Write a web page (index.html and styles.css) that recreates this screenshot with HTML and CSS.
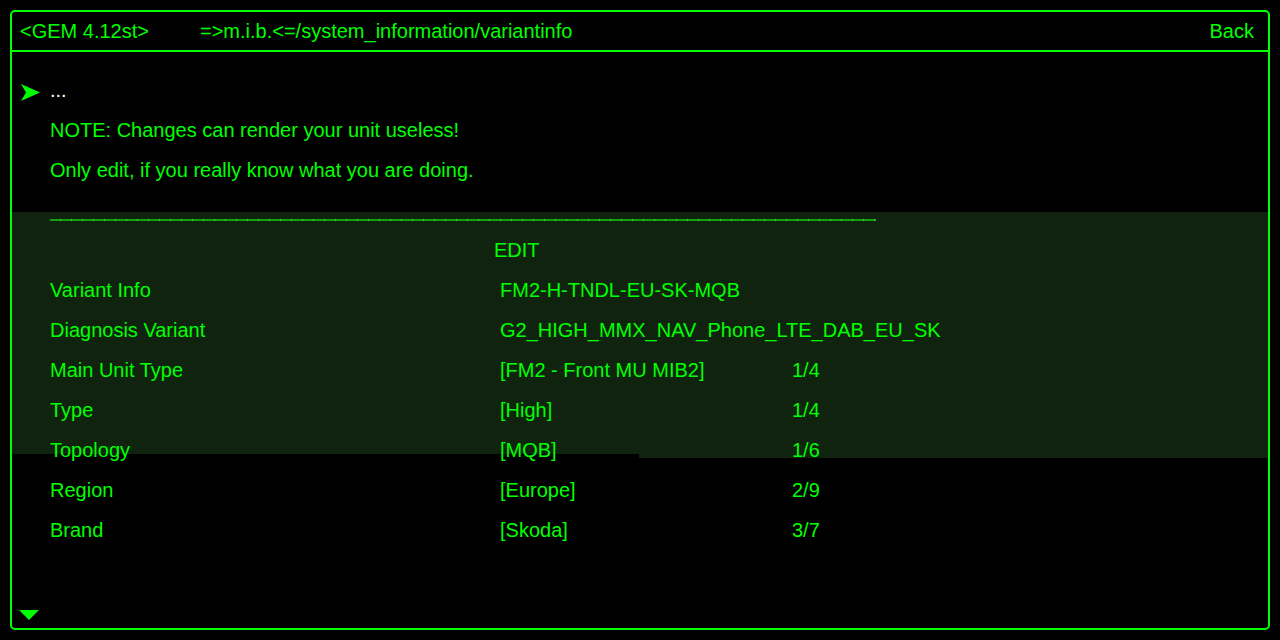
FILE: index.html
```html
<!DOCTYPE html>
<html>
<head>
<meta charset="utf-8">
<link rel="stylesheet" href="styles.css">
</head>
<body>
<div class="frame">
  <div class="header">
    <span class="ver">&lt;GEM 4.12st&gt;</span>
    <span class="path">=&gt;m.i.b.&lt;=/system_information/variantinfo</span>
    <span class="back">Back</span>
  </div>
  <div class="content">
    <div class="row first">
      <svg class="cursor" width="19" height="17" viewBox="0 0 19 17"><polygon points="0,0 19,8.5 0,17 5,8.5" fill="#00ff00"/></svg>
      <span class="label dots">...</span>
    </div>
    <div class="row"><span class="label wide">NOTE: Changes can render your unit useless!</span></div>
    <div class="row"><span class="label wide">Only edit, if you really know what you are doing.</span></div>
    <div class="gap"></div>
    <div class="panel">
      <div class="sep"><div class="sepline"></div></div>
      <div class="row"><span class="label"></span><span class="edit">EDIT</span></div>
      <div class="row"><span class="label">Variant Info</span><span class="value">FM2-H-TNDL-EU-SK-MQB</span></div>
      <div class="row"><span class="label">Diagnosis Variant</span><span class="value">G2_HIGH_MMX_NAV_Phone_LTE_DAB_EU_SK</span></div>
      <div class="row"><span class="label">Main Unit Type</span><span class="value">[FM2 - Front MU MIB2]</span><span class="count">1/4</span></div>
      <div class="row"><span class="label">Type</span><span class="value">[High]</span><span class="count">1/4</span></div>
      <div class="row"><span class="label">Topology</span><span class="value">[MQB]</span><span class="count">1/6</span></div>
      <div class="row"><span class="label">Region</span><span class="value">[Europe]</span><span class="count">2/9</span></div>
      <div class="row"><span class="label">Brand</span><span class="value">[Skoda]</span><span class="count">3/7</span></div>
    </div>
  </div>
  <div class="footer">
    <svg class="more" width="20" height="10" viewBox="0 0 20 10"><polygon points="0,0 20,0 10,10" fill="#00ff00"/></svg>
  </div>
</div>
</body>
</html>
```

FILE: styles.css
```css
html, body {
  margin: 0;
  padding: 0;
  background: #000;
}
body {
  width: 1280px;
  height: 640px;
  padding: 10px;
  box-sizing: border-box;
  font-family: "Liberation Sans", Arial, sans-serif;
  color: #00ff00;
  overflow: hidden;
}
.frame {
  width: 1260px;
  height: 620px;
  box-sizing: border-box;
  border: 2px solid #00ff00;
  border-radius: 5px;
  display: flex;
  flex-direction: column;
}
.header {
  height: 38px;
  line-height: 38px;
  font-size: 20px;
  border-bottom: 2px solid #00ff00;
  display: flex;
  padding: 0 14px 0 8px;
  flex-shrink: 0;
  white-space: nowrap;
}
.ver {
  width: 180px;
}
.path {
  flex: 1;
}
.content {
  flex: 1;
  padding-top: 18px;
  font-size: 20px;
}
.row {
  height: 40px;
  line-height: 40px;
  display: flex;
  align-items: center;
  padding-left: 38px;
  white-space: nowrap;
}
.row.first {
  padding-left: 9px;
}
.cursor {
  width: 19px;
  margin-right: 10px;
  margin-top: 4px;
}
.label {
  width: 450px;
}
.label.wide {
  width: auto;
}
.dots {
  color: #ffffff;
}
.gap {
  height: 22px;
}
.panel {
  background:
    linear-gradient(#10230f, #10230f) 0 0 / 627px 242px no-repeat,
    linear-gradient(#10230f, #10230f) 627px 0 / calc(100% - 627px) 246px no-repeat;
}
.sep {
  height: 18px;
  padding-left: 38px;
  padding-top: 7px;
  box-sizing: border-box;
}
.sepline {
  width: 826px;
  height: 2px;
  background: repeating-linear-gradient(to right, #12a012 0 10px, #30cc30 10px 11px);
}
.edit {
  margin-left: -6px;
}
.value {
  width: 292px;
}
.count {
  width: 60px;
}
.footer {
  height: 18px;
  padding-left: 7px;
  flex-shrink: 0;
}
.more {
  display: block;
}
```
